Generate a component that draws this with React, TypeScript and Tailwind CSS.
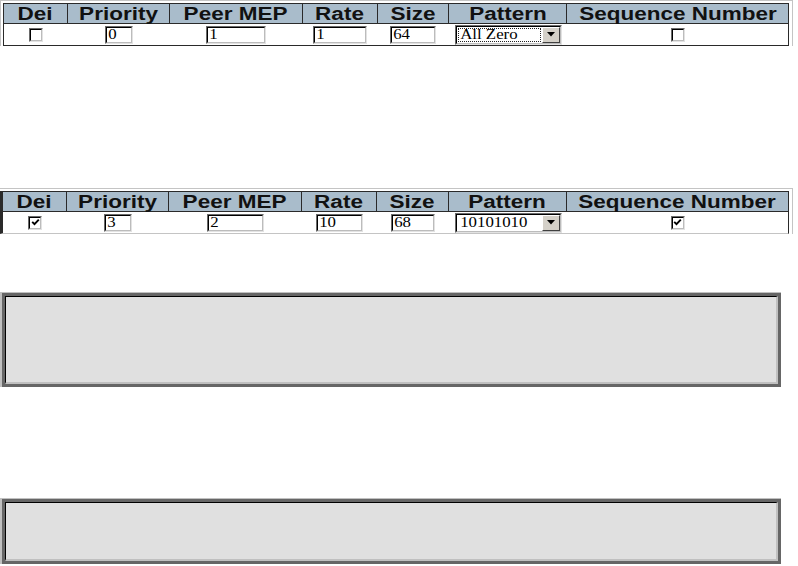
import React from "react";

const cols = [
  { name: "Dei", w: "w-[64px]" },
  { name: "Priority", w: "w-[102px]" },
  { name: "Peer MEP", w: "w-[133px]" },
  { name: "Rate", w: "w-[75px]" },
  { name: "Size", w: "w-[72px]" },
  { name: "Pattern", w: "w-[118px]" },
  { name: "Sequence Number", w: "w-[221px]" },
];

// classic sunken control frame: dark top/left, light bottom/right
const outer = "border border-t-[#6a6a6a] border-l-[#6a6a6a] border-b-[#e2e2e2] border-r-[#e2e2e2]";
const inner = "border border-t-[#000] border-l-[#000] border-b-[#bcbcbc] border-r-[#bcbcbc]";

function Check({ on }: { on?: boolean }) {
  return (
    <span className={`inline-block w-[14px] h-[14px] ${outer}`}>
      <span className={`flex w-full h-full items-center justify-center bg-white ${inner}`}>
        {on && (
          <svg width="9" height="9" viewBox="0 0 9 9">
            <path d="M1.2 3.8 L3.5 6.2 L7.8 1.6" stroke="#000" strokeWidth="1.9" fill="none" />
          </svg>
        )}
      </span>
    </span>
  );
}

function Field({ value, w }: { value: string; w: string }) {
  return (
    <span className={`inline-block ${w} h-[18px] ${outer}`}>
      <span className={`flex w-full h-full items-center overflow-hidden bg-white ${inner}`}>
        <span className="inline-block origin-left scale-x-[1.2] pl-[1px] font-['Liberation_Serif'] text-[14px] leading-none text-black">
          {value}
        </span>
      </span>
    </span>
  );
}

function Select({ value, focus }: { value: string; focus?: boolean }) {
  return (
    <span className={`inline-flex w-[107px] h-[20px] ${outer}`}>
      <span className={`flex flex-1 items-stretch bg-white ${inner}`}>
        <span className="flex flex-1 items-center p-[1px]">
          <span
            className={`flex h-full flex-1 items-center overflow-hidden ${
              focus ? "border border-dotted border-[#222]" : "border border-transparent"
            }`}
          >
            <span className="inline-block origin-left scale-x-[1.2] pl-[1px] font-['Liberation_Serif'] text-[14px] leading-none text-black whitespace-nowrap">
              {value}
            </span>
          </span>
        </span>
        <span className="flex w-[18px] items-center justify-center bg-[#d4d0c8] border border-t-white border-l-white border-b-[#404040] border-r-[#404040]">
          <svg width="8" height="5" viewBox="0 0 8 5">
            <path d="M0 0 H8 L4 4.5 Z" fill="#000" />
          </svg>
        </span>
      </span>
    </span>
  );
}

type Row = {
  dei: boolean;
  prio: string;
  peer: string;
  rate: string;
  size: string;
  pattern: string;
  seq: boolean;
  focus?: boolean;
  widths: string[];
};

function CfgTable({ row, second }: { row: Row; second?: boolean }) {
  const cells = [
    <Check on={row.dei} />,
    <Field value={row.prio} w={row.widths[0]} />,
    <Field value={row.peer} w={row.widths[1]} />,
    <Field value={row.rate} w={row.widths[2]} />,
    <Field value={row.size} w={row.widths[3]} />,
    <Select value={row.pattern} focus={row.focus} />,
    <Check on={row.seq} />,
  ];
  return (
    <div className={`w-[793px] border-t border-r border-[#c4c4c4] pt-[2px] ${second ? "" : "border-l pl-[2px]"}`}>
      <div
        className={`border-t border-r border-[#2a2a2a] ${
          second ? "w-[789px] border-l-[3px] border-b border-b-[#c4c4c4]" : "w-[786px] border-l border-b"
        }`}
      >
        <div className="flex h-[20px] bg-[#a9bccb] border-b border-[#2a2a2a]">
          {cols.map((c, i) => (
            <div
              key={c.name}
              className={`${c.w} flex items-center justify-center ${
                i < cols.length - 1 ? "border-r border-[#2a2a2a]" : ""
              }`}
            >
              <span className="inline-block scale-x-[1.25] text-[18px] leading-none font-bold text-[#111] whitespace-nowrap">
                {c.name}
              </span>
            </div>
          ))}
        </div>
        <div className="flex h-[21px] bg-white">
          {cells.map((cell, i) => (
            <div key={i} className={`${cols[i].w} flex items-center justify-center`}>
              {cell}
            </div>
          ))}
        </div>
      </div>
    </div>
  );
}

function GrayBox({ h }: { h: string }) {
  return (
    <div className="w-[781px] border-t border-l-2 border-[#c0c0c0] border-b-black border-r-black">
      <div className="border-[3px] border-[#666]">
        <div className={`${h} bg-[#e0e0e0] border-t border-l border-black border-b-2 border-r-2 border-b-[#c0c0c0] border-r-[#c0c0c0]`} />
      </div>
    </div>
  );
}

export default function App() {
  return (
    <div className="w-[798px] h-[566px] bg-white overflow-hidden font-['Liberation_Sans',Arial,sans-serif]">
      <CfgTable
        row={{
          dei: false,
          prio: "0",
          peer: "1",
          rate: "1",
          size: "64",
          pattern: "All Zero",
          seq: false,
          focus: true,
          widths: ["w-[28px]", "w-[60px]", "w-[54px]", "w-[46px]"],
        }}
      />
      <div className="h-[142px]" />
      <CfgTable
        second
        row={{
          dei: true,
          prio: "3",
          peer: "2",
          rate: "10",
          size: "68",
          pattern: "10101010",
          seq: true,
          widths: ["w-[28px]", "w-[57px]", "w-[47px]", "w-[44px]"],
        }}
      />
      <div className="h-[58px]" />
      <GrayBox h="h-[88px]" />
      <div className="h-[111px]" />
      <GrayBox h="h-[59px]" />
    </div>
  );
}
